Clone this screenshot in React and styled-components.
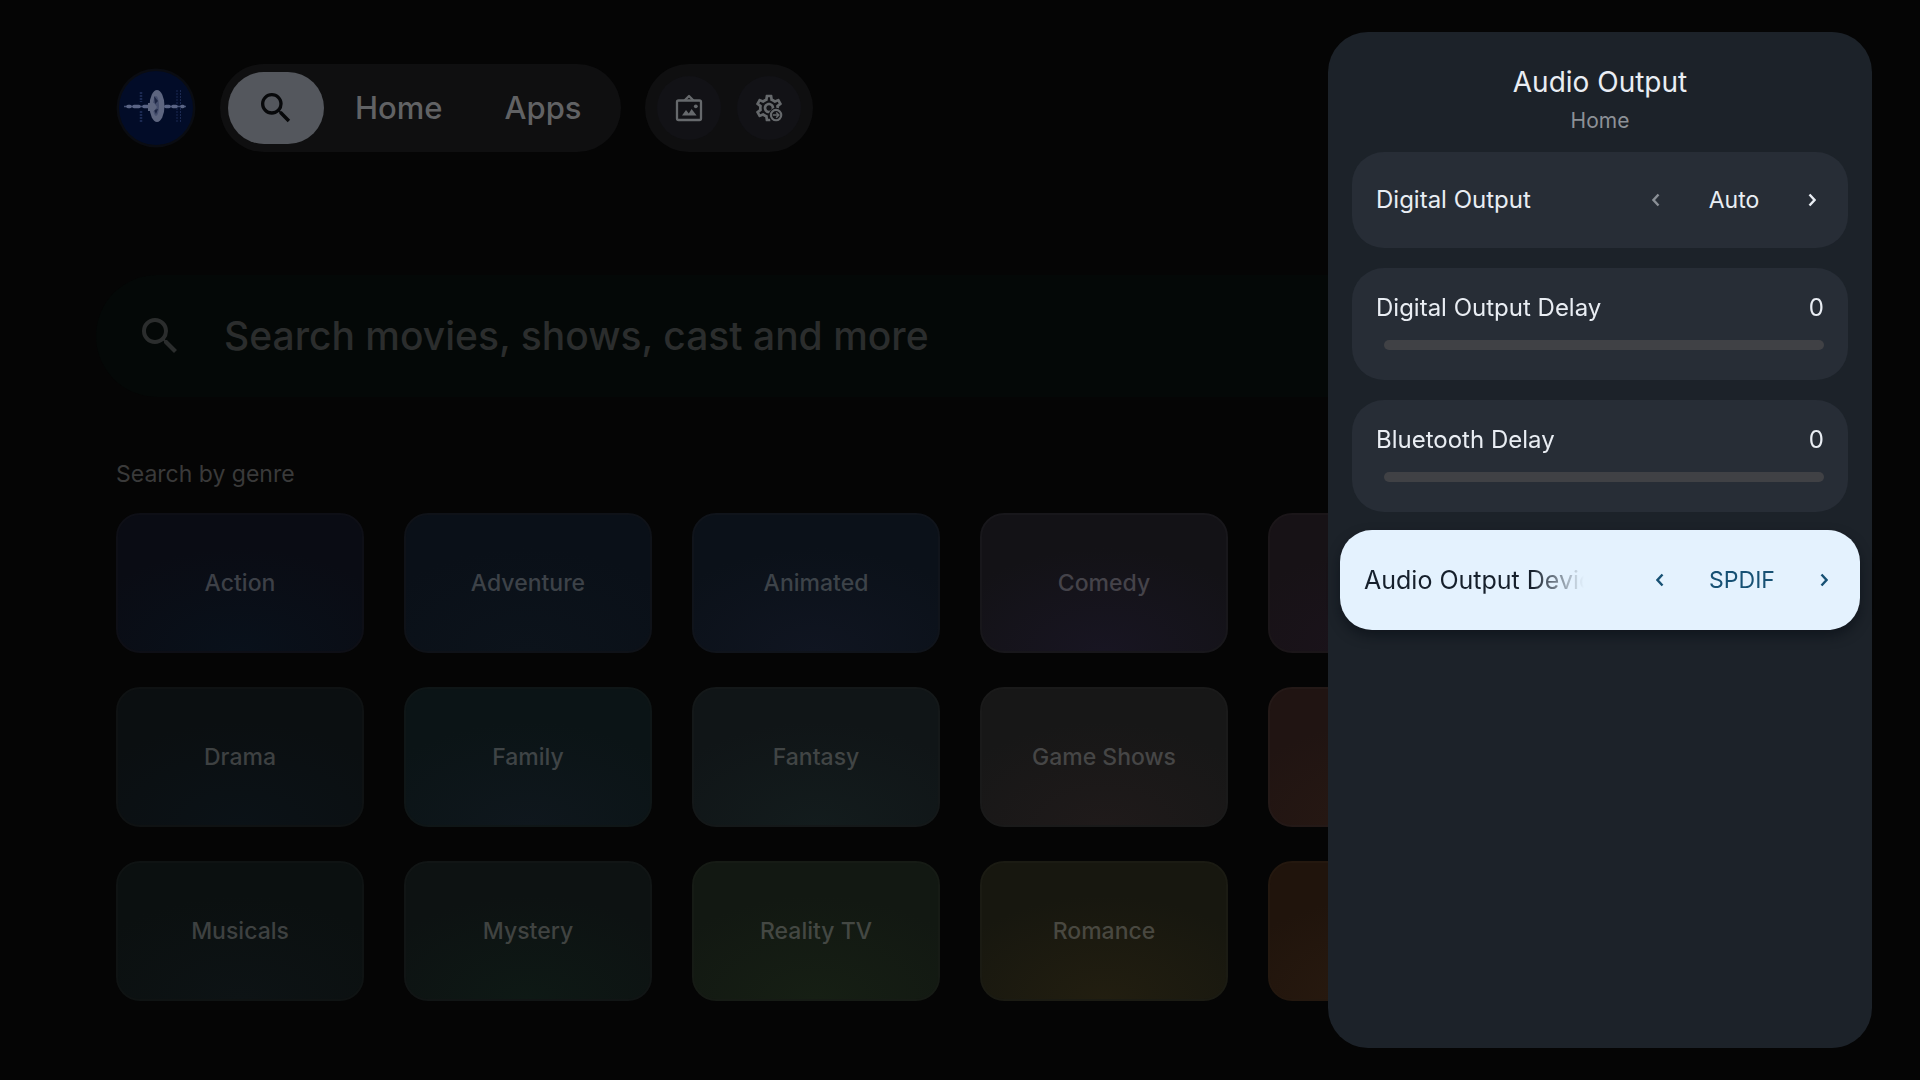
import React, { useState } from "react";
import styled, { createGlobalStyle, css } from "styled-components";
import { MdSearch, MdOutlineSettings } from "react-icons/md";

const GlobalStyle = createGlobalStyle`
  *, *::before, *::after { box-sizing: border-box; }
  body {
    margin: 0;
    background: #050505;
    color: #e9edf3;
    font-family: Inter, "Open Sans", "Liberation Sans", sans-serif;
  }
  button, input { font: inherit; }
`;

const Screen = styled.div`
  min-height: 100vh;
  padding: 64px 96px 48px;
  overflow: hidden;
`;

const TopBar = styled.header`
  display: flex;
  align-items: center;
  gap: 24px;
  padding: 0 20px;
`;

const Avatar = styled.button`
  display: block;
  width: 80px;
  height: 80px;
  padding: 0;
  border: 0;
  background: none;
`;

const NavPill = styled.nav`
  display: flex;
  align-items: center;
  height: 88px;
  padding: 0 8px;
  border-radius: 44px;
  background: #0f0f10;
`;

const NavButton = styled.button`
  display: flex;
  align-items: center;
  justify-content: center;
  height: 72px;
  padding: 0 31px;
  border: 0;
  border-radius: 36px;
  background: none;
  color: #616264;
  font-size: 31px;
  font-weight: 500;
  line-height: 40px;
  ${(p) =>
    p.$selected &&
    css`
      width: 96px;
      padding: 0;
      background: #54575d;
      color: #07080a;
    `}
`;

const ActionPill = styled.div`
  display: flex;
  align-items: center;
  gap: 16px;
  height: 88px;
  padding: 0 12px;
  border-radius: 44px;
  background: #0f0f10;
`;

const ActionButton = styled.button`
  display: flex;
  align-items: center;
  justify-content: center;
  width: 64px;
  height: 64px;
  padding: 0;
  border: 0;
  border-radius: 50%;
  background: #121216;
  color: #66696c;
`;

const SearchBar = styled.label`
  display: flex;
  align-items: center;
  gap: 40px;
  height: 122px;
  margin-top: 123px;
  padding: 0 40px;
  border-radius: 61px;
  background: #040807;
  color: #2b2d2d;
`;

const SearchInput = styled.input`
  flex: 1;
  min-width: 0;
  padding: 0;
  border: 0;
  outline: 0;
  background: none;
  color: inherit;
  font-size: 39px;
  font-weight: 500;
  line-height: 48px;
  &::placeholder {
    color: #2b2d2d;
    opacity: 1;
  }
`;

const Genres = styled.section`
  padding: 0 20px;
  margin-top: 61px;
`;

const GenresTitle = styled.h2`
  margin: 0 0 23px;
  color: #3a3a3a;
  font-size: 23px;
  font-weight: 400;
  line-height: 32px;
`;

const GenreGrid = styled.div`
  display: grid;
  grid-template-columns: repeat(5, 248px);
  grid-auto-rows: 140px;
  gap: 34px 40px;
`;

const GenreTile = styled.button`
  padding: 0;
  border: 2px solid ${(p) => p.$edge};
  border-radius: 24px;
  background: radial-gradient(ellipse 70% 75% at 50% 100%, ${(p) => p.$glow}, ${(p) => p.$base});
  background-origin: border-box;
  color: ${(p) => p.$ink};
  font-size: 23px;
  font-weight: 500;
  line-height: 32px;
`;

const Panel = styled.aside`
  position: fixed;
  top: 32px;
  right: 48px;
  bottom: 32px;
  width: 544px;
  padding: 30px 24px;
  border-radius: 40px;
  background: #1c2229;
`;

const PanelTitle = styled.h1`
  margin: 0;
  font-size: 28px;
  font-weight: 400;
  line-height: 40px;
  text-align: center;
`;

const PanelSubtitle = styled.p`
  margin: 3px 0 15px;
  color: #8c9197;
  font-size: 21px;
  line-height: 32px;
  text-align: center;
`;

const SettingList = styled.div`
  display: flex;
  flex-direction: column;
  gap: 20px;
`;

const ChoiceCard = styled.div`
  display: flex;
  align-items: center;
  height: 96px;
  padding: 0 24px;
  border-radius: 32px;
  background: #272d36;
  font-size: 24px;
  line-height: 32px;
  ${(p) =>
    p.$focused &&
    css`
      height: 100px;
      margin: -2px -12px;
      background: #e4f2fe;
      color: #16202c;
      font-size: 25px;
      box-shadow: 0 6px 12px rgba(8, 12, 20, 0.55);
    `}
`;

const ChoiceLabel = styled.span`
  flex: 1;
  min-width: 0;
  margin-right: 64px;
  overflow: hidden;
  white-space: nowrap;
  ${(p) =>
    p.$fade &&
    css`
      mask-image: linear-gradient(to right, #000 calc(100% - 52px), transparent);
    `}
`;

const Stepper = styled.div`
  display: flex;
  align-items: center;
  color: ${(p) => (p.$focused ? "#175174" : "inherit")};
`;

const StepButton = styled.button`
  display: flex;
  align-items: center;
  justify-content: center;
  width: 24px;
  height: 40px;
  padding: 0;
  border: 0;
  background: none;
  color: inherit;
  &:disabled {
    color: #8a8f96;
  }
`;

const StepValue = styled.output`
  width: ${(p) => (p.$focused ? "140px" : "132px")};
  font-size: 23px;
  text-align: center;
`;

const SliderCard = styled.div`
  padding: 24px 24px 30px;
  border-radius: 32px;
  background: #272d36;
`;

const SliderHead = styled.div`
  display: flex;
  justify-content: space-between;
  margin-bottom: 16px;
  font-size: 24px;
  line-height: 32px;
`;

const Slider = styled.input`
  display: block;
  width: calc(100% - 8px);
  height: 10px;
  margin: 0 0 0 8px;
  border-radius: 5px;
  appearance: none;
  background: #404145;
  &::-webkit-slider-thumb {
    appearance: none;
    width: 0;
    height: 10px;
  }
`;

const genres = [
  { name: "Action", base: "#0a0c14", glow: "#09111b", edge: "#0e0f16", ink: "#3d4047" },
  { name: "Adventure", base: "#0a1018", glow: "#0c131b", edge: "#0f1218", ink: "#3d4248" },
  { name: "Animated", base: "#0b1119", glow: "#101521", edge: "#10141b", ink: "#3d4349" },
  { name: "Comedy", base: "#131216", glow: "#181522", edge: "#18171b", ink: "#45434a" },
  { base: "#171216", glow: "#1b131c", edge: "#1b1619", ink: "#45434a" },
  { name: "Drama", base: "#0b0f11", glow: "#0b1217", edge: "#0f1213", ink: "#3e4142" },
  { name: "Family", base: "#0b1416", glow: "#0f171d", edge: "#0f1617", ink: "#3f4446" },
  { name: "Fantasy", base: "#101517", glow: "#131c1d", edge: "#141819", ink: "#414545" },
  { name: "Game Shows", base: "#171717", glow: "#1f1a1a", edge: "#1a1a1a", ink: "#464646" },
  { base: "#201412", glow: "#281913", edge: "#241917", ink: "#464646" },
  { name: "Musicals", base: "#0b1010", glow: "#0d1315", edge: "#0f1313", ink: "#3e4141" },
  { name: "Mystery", base: "#0d1212", glow: "#0e1915", edge: "#111515", ink: "#404341" },
  { name: "Reality TV", base: "#121812", glow: "#161f14", edge: "#161b15", ink: "#444843" },
  { name: "Romance", base: "#17170f", glow: "#221e10", edge: "#1b1b13", ink: "#494840" },
  { base: "#20140c", glow: "#2a1b10", edge: "#24180f", ink: "#494840" },
];

function StationPicture() {
  return (
    <svg width="80" height="80" viewBox="0 0 80 80" aria-hidden="true">
      <circle cx="40" cy="40" r="39.5" fill="#0a0c12" />
      <circle cx="40" cy="40" r="37" fill="#020c28" />
      <g stroke="#1b2952" strokeWidth="2.500" strokeDasharray="2 1">
        <path d="M25 24v10M25 43v11" />
        <path d="M61 22v33M64.500 22v33" strokeWidth="1" />
      </g>
      <path d="M8 38.500h62" stroke="#434f74" strokeWidth="1.500" />
      <path
        d="M12 38.500h2M18 38.500h5M28 38.500h6M50 38.500h3M57 38.500h3M66 38.500h1"
        stroke="#5a6485"
        strokeWidth="3.500"
        strokeLinecap="round"
      />
      <ellipse cx="41" cy="38" rx="7.500" ry="16" fill="#5d657f" />
      <ellipse cx="40" cy="38" rx="3" ry="10" fill="#454e6d" />
      <path d="M38 28l4 5-3 3zM38 42l4-1-2 5z" fill="#1b2442" />
      <path d="M32 35h6l3 4-3 4h-6z" fill="#5d657f" />
    </svg>
  );
}

function FrameIcon() {
  return (
    <svg width="28" height="28" viewBox="0 0 28 28" fill="none" stroke="currentColor" strokeWidth="2.300" aria-hidden="true">
      <rect x="2" y="6.500" width="24" height="19.500" rx="1.500" />
      <path d="M9.500 6.500L14 2 18.500 6.500" strokeLinejoin="round" />
      <path d="M7 21.500l4-5.500 2.800 3.600L16.600 15l5 6.500z" fill="currentColor" stroke="none" />
      <circle cx="20.800" cy="12.300" r="1.900" fill="currentColor" stroke="none" />
    </svg>
  );
}

function SettingsShortcutIcon() {
  return (
    <svg width="32" height="32" viewBox="0 0 24 24" aria-hidden="true">
      <mask id="gearCut">
        <rect width="24" height="24" fill="#fff" />
        <circle cx="17.300" cy="17.300" r="5.500" fill="#000" />
        <path d="M13 24V16h11v8z" fill="#000" />
      </mask>
      <g mask="url(#gearCut)" stroke="currentColor" strokeWidth="0.300">
        <MdOutlineSettings size={24} />
      </g>
      <circle cx="17.300" cy="17.300" r="3.900" fill="none" stroke="currentColor" strokeWidth="1.600" />
      <path d="M14.800 17.300h4M17.400 15.300l2 2-2 2" fill="none" stroke="currentColor" strokeWidth="1.100" />
    </svg>
  );
}

function Chevron({ left }) {
  return (
    <svg width="8" height="14" viewBox="0 0 8 14" fill="none" stroke="currentColor" strokeWidth="2.400" aria-hidden="true">
      <path d={left ? "M6.500 1.500L1.500 7l5 5.500" : "M1.500 1.500l5 5.500-5 5.500"} />
    </svg>
  );
}

function ChoiceSetting({ label, value, focused, atStart }) {
  return (
    <ChoiceCard $focused={focused} role="group" aria-label={label}>
      <ChoiceLabel $fade={focused}>{label}</ChoiceLabel>
      <Stepper $focused={focused}>
        <StepButton type="button" aria-label="Previous" disabled={atStart}>
          <Chevron left />
        </StepButton>
        <StepValue $focused={focused}>{value}</StepValue>
        <StepButton type="button" aria-label="Next">
          <Chevron />
        </StepButton>
      </Stepper>
    </ChoiceCard>
  );
}

function SliderSetting({ id, label }) {
  const [value, setValue] = useState(0);
  return (
    <SliderCard>
      <SliderHead>
        <label htmlFor={id}>{label}</label>
        <output htmlFor={id}>{value}</output>
      </SliderHead>
      <Slider id={id} type="range" min="0" max="250" value={value} onChange={(e) => setValue(Number(e.target.value))} />
    </SliderCard>
  );
}

export default function App() {
  return (
    <>
      <GlobalStyle />
      <Screen>
        <TopBar>
          <Avatar type="button" aria-label="Profile">
            <StationPicture />
          </Avatar>
          <NavPill>
            <NavButton type="button" $selected aria-label="Search">
              <MdSearch size={40} />
            </NavButton>
            <NavButton type="button">Home</NavButton>
            <NavButton type="button">Apps</NavButton>
          </NavPill>
          <ActionPill>
            <ActionButton type="button" aria-label="Ambient mode">
              <FrameIcon />
            </ActionButton>
            <ActionButton type="button" aria-label="Settings">
              <SettingsShortcutIcon />
            </ActionButton>
          </ActionPill>
        </TopBar>

        <SearchBar>
          <MdSearch size={48} />
          <SearchInput type="text" aria-label="Search" placeholder="Search movies, shows, cast and more" />
        </SearchBar>

        <Genres>
          <GenresTitle>Search by genre</GenresTitle>
          <GenreGrid>
            {genres.map((g, i) => (
              <GenreTile
                key={i}
                type="button"
                aria-label={g.name || "More"}
                $base={g.base}
                $glow={g.glow}
                $edge={g.edge}
                $ink={g.ink}
              >
                {g.name}
              </GenreTile>
            ))}
          </GenreGrid>
        </Genres>
      </Screen>

      <Panel>
        <PanelTitle>Audio Output</PanelTitle>
        <PanelSubtitle>Home</PanelSubtitle>
        <SettingList>
          <ChoiceSetting label="Digital Output" value="Auto" atStart />
          <SliderSetting id="digital-delay" label="Digital Output Delay" />
          <SliderSetting id="bluetooth-delay" label="Bluetooth Delay" />
          <ChoiceSetting label="Audio Output Device" value="SPDIF" focused />
        </SettingList>
      </Panel>
    </>
  );
}
